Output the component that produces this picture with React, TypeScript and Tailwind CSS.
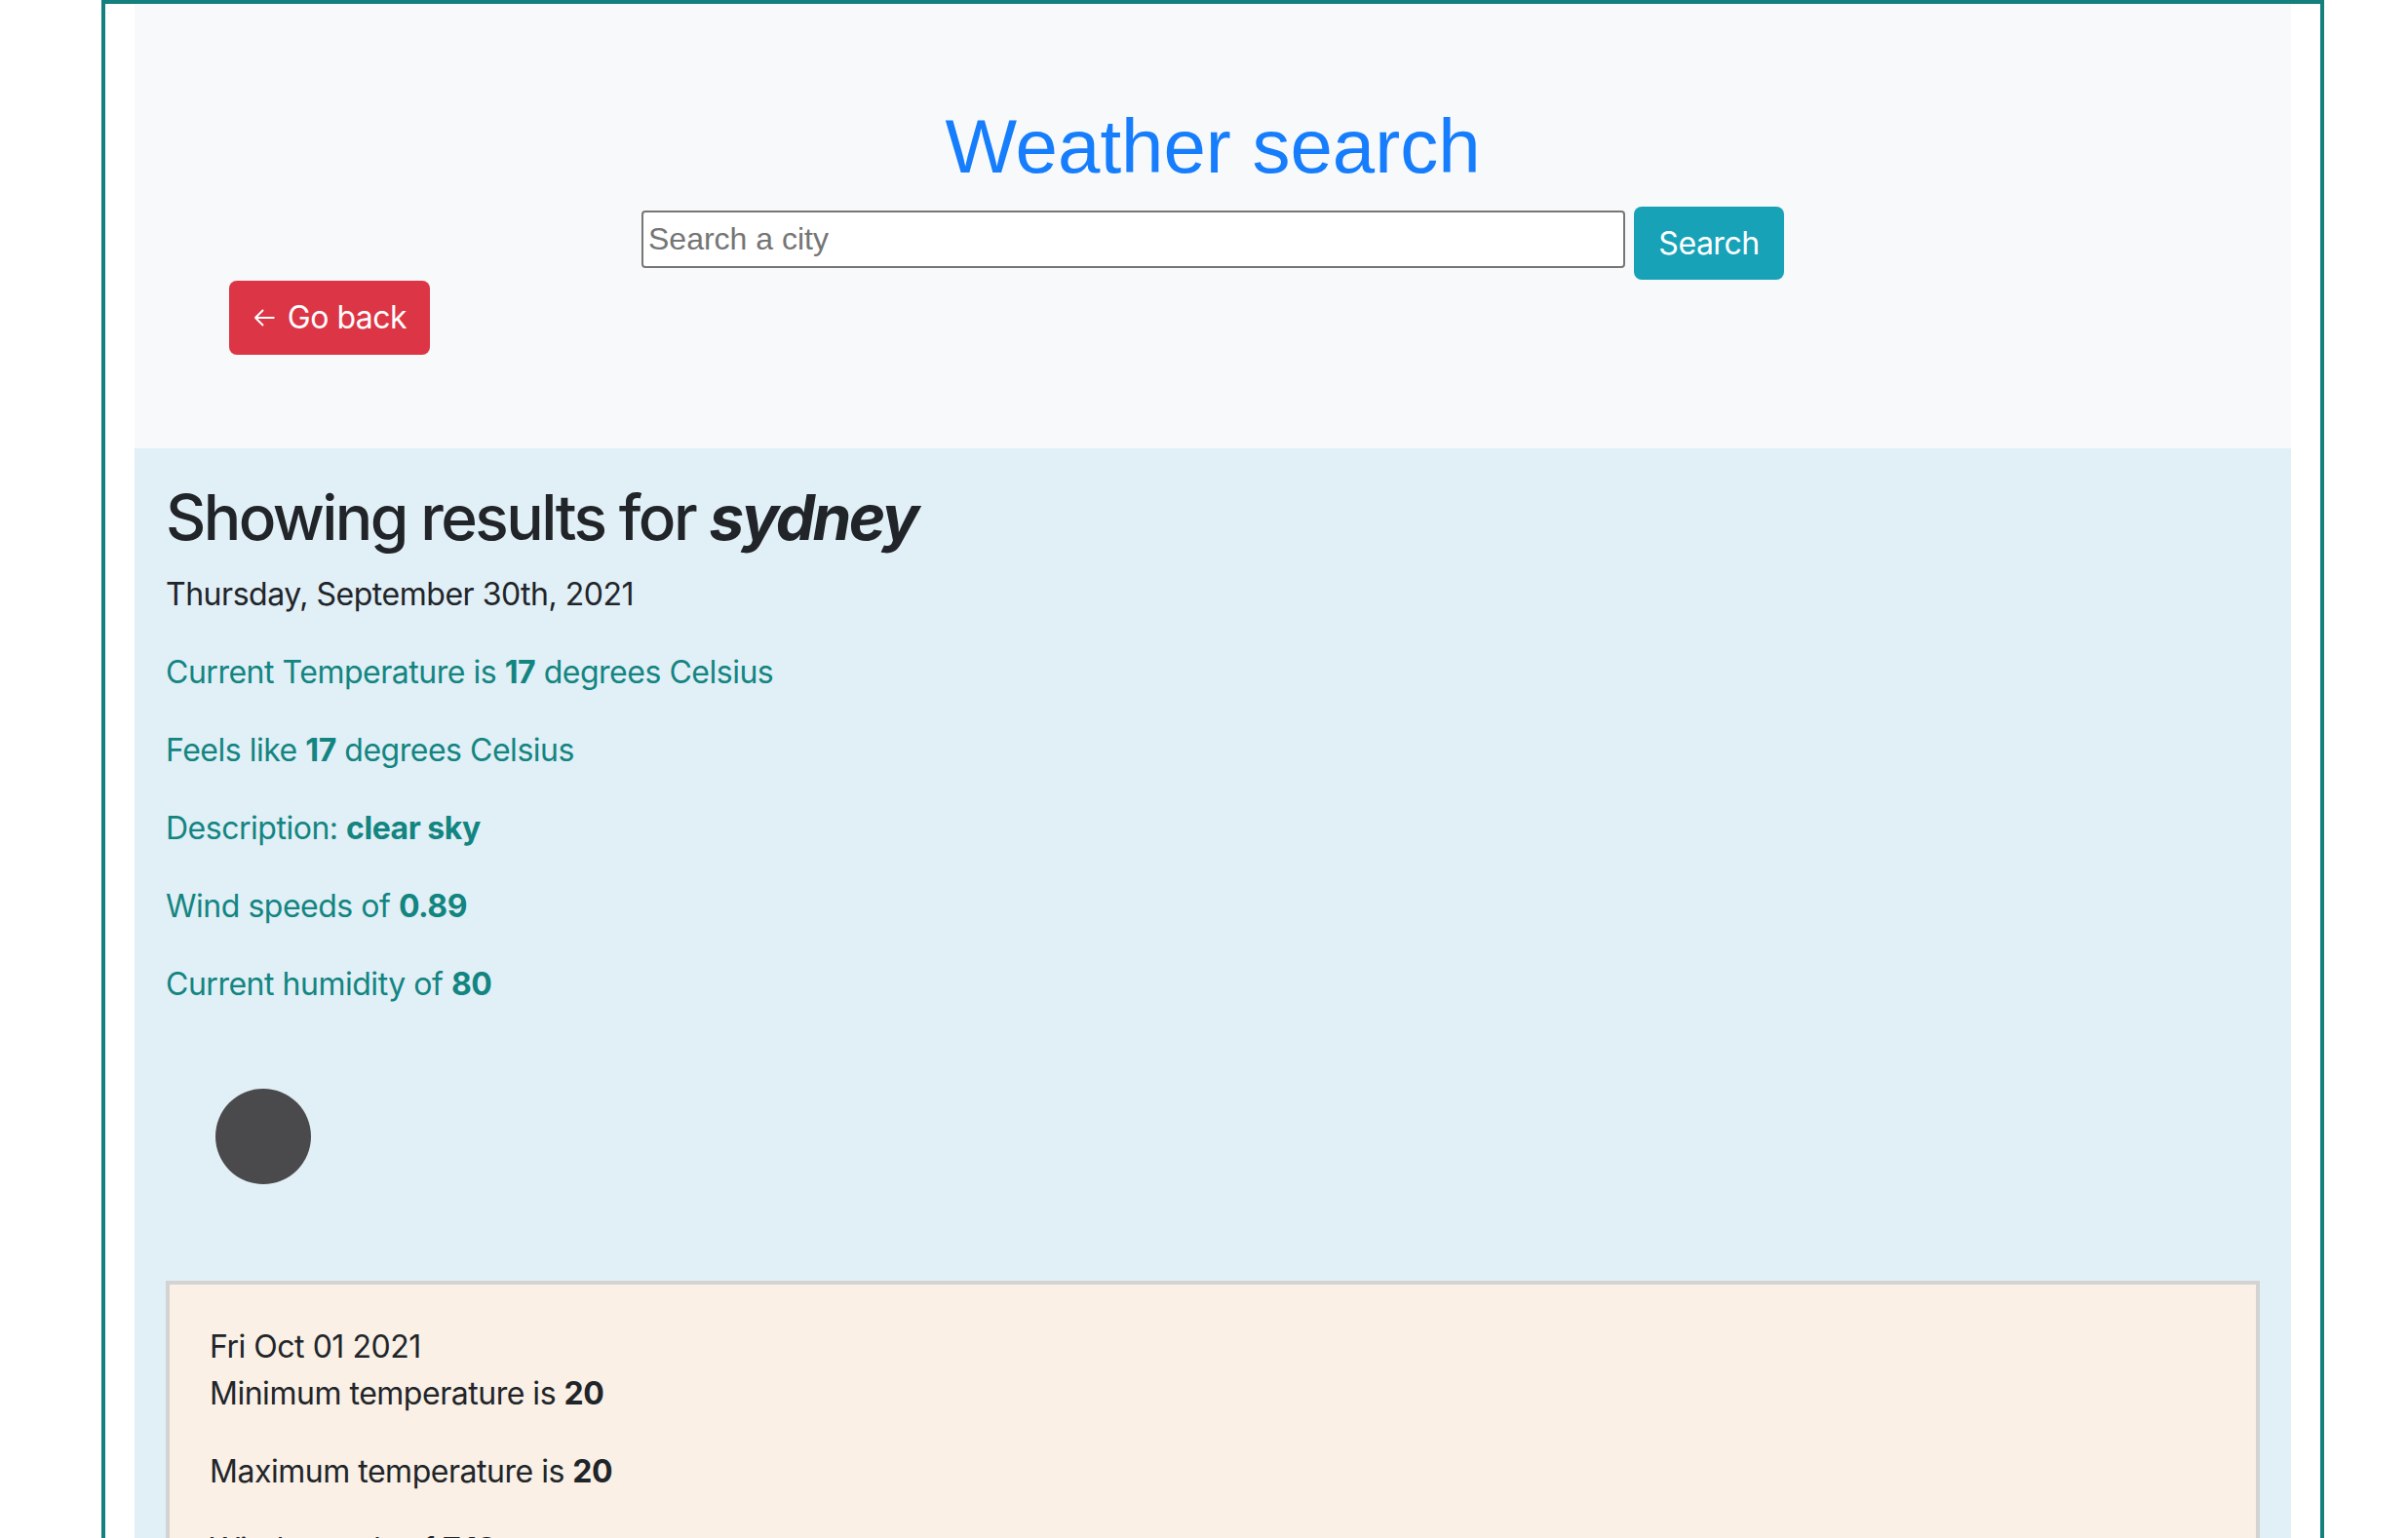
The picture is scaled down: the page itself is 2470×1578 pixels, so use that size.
export default function App() {
  const stats = [
    { label: "Current Temperature is ", value: "17", after: " degrees Celsius" },
    { label: "Feels like ", value: "17", after: " degrees Celsius" },
    { label: "Description: ", value: "clear sky", after: "" },
    { label: "Wind speeds of ", value: "0.89", after: "" },
    { label: "Current humidity of ", value: "80", after: "" },
  ];

  return (
    <div className="min-h-screen w-full bg-white font-['Inter',sans-serif] tracking-[-0.03em] text-[#212529]">
      <div className="ml-[104px] w-[2280px] border-4 border-[#14807e] px-[30px]">
        {/* Search header */}
        <section className="bg-[#f8f9fa] pt-[98px] pb-[96px]">
          <h1 className="text-center font-['Liberation_Sans',Arial,sans-serif] text-[78px] leading-[96px] tracking-normal text-[#167dfc] mb-[14px]">
            Weather search
          </h1>
          <div className="flex items-start justify-center gap-[9px]">
            <input
              type="text"
              placeholder="Search a city"
              className="mt-[4px] h-[59px] w-[1009px] rounded-[4px] border-2 border-[#767676] bg-white px-[5px] font-['Liberation_Sans',Arial,sans-serif] text-[32px] tracking-normal text-black placeholder-[#757575] outline-none"
            />
            <button className="h-[75px] w-[154px] rounded-[8px] bg-[#17a2b8] text-[32px] text-white">
              Search
            </button>
          </div>
          <button className="ml-[97px] mt-[1px] flex h-[76px] w-[206px] items-center justify-center gap-[12px] rounded-[8px] bg-[#dc3545] text-[32px] text-white">
            <svg width="24" height="24" viewBox="0 0 16 16" fill="none" stroke="currentColor" strokeWidth="1.3" strokeLinecap="round" strokeLinejoin="round">
              <path d="M14.5 8H2M7 3L2 8l5 5" />
            </svg>
            <span>Go back</span>
          </button>
        </section>

        {/* Results */}
        <section className="bg-[#e1eff7] px-[32px] pt-[33px] pb-[64px]">
          <h2 className="mb-[16px] text-[64px] leading-[76.8px] font-medium tracking-[-0.04em]">
            Showing results for <em className="font-bold">sydney</em>
          </h2>
          <p className="mb-[32px] text-[32px] leading-[48px]">Thursday, September 30th, 2021</p>
          {stats.map((s) => (
            <p key={s.label} className="mb-[32px] text-[32px] leading-[48px] text-[#138581]">
              {s.label}
              <strong className="font-bold">{s.value}</strong>
              {s.after}
            </p>
          ))}

          <div className="flex h-[200px] w-[200px] items-center justify-center">
            <div className="h-[98px] w-[98px] rounded-full bg-[#4a4a4c] blur-[0.6px]" />
          </div>

          <div className="mt-[48px] border-4 border-[#d3d3d3] bg-[#faf0e6] px-[41px] pt-[40px] pb-[40px] text-[32px] leading-[48px]">
            <div>Fri Oct 01 2021</div>
            <p className="mb-[32px]">
              Minimum temperature is <strong className="font-bold">20</strong>
            </p>
            <p className="mb-[32px]">
              Maximum temperature is <strong className="font-bold">20</strong>
            </p>
            <p className="mb-[32px]">
              Wind speeds of <strong className="font-bold">7.13</strong>
            </p>
            <p className="mb-[32px]">
              Description: <strong className="font-bold">few clouds</strong>
            </p>
          </div>
        </section>
      </div>
    </div>
  );
}
